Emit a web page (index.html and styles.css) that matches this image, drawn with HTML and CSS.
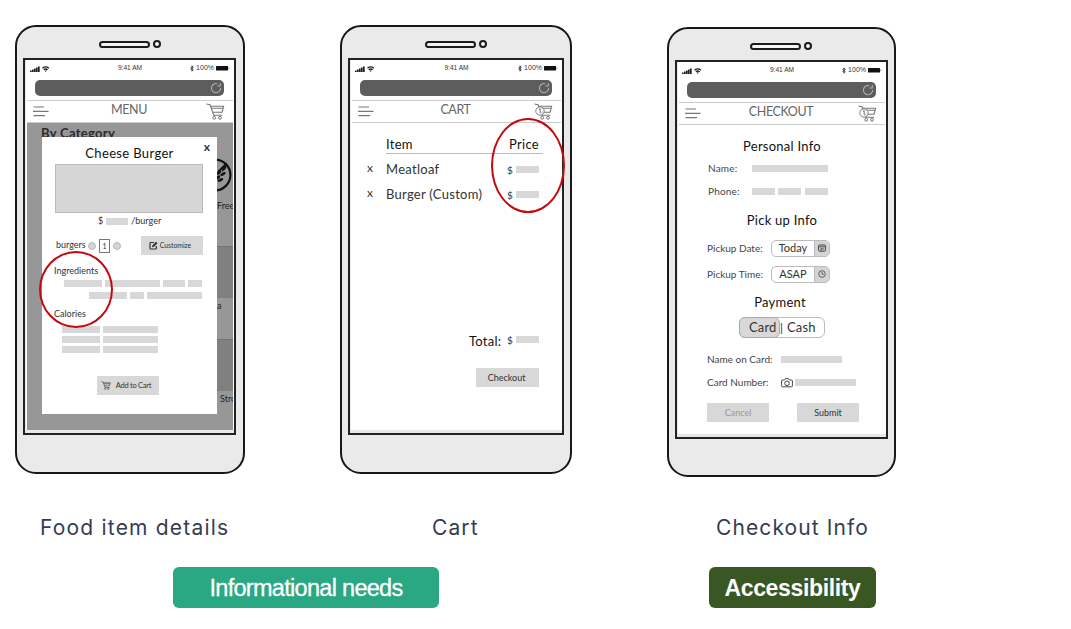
FILE: index.html
```html
<!DOCTYPE html>
<html lang="en">
<head>
<meta charset="utf-8">
<title>Wireframes</title>
<link rel="stylesheet" href="styles.css">
</head>
<body>
<svg class="defs" aria-hidden="true">
  <symbol id="signal" viewBox="0 0 20 8"><path d="M0 5.500h1.700V7H0zM2 4.600h1.700V7H2zM4 3.600h1.700V7H4zM6 2.400h1.700V7H6zM8 1.400h1.700V7H8z" fill="#222"/><path d="M12.500 3.200q3.200-2.600 6.400 0M13.800 4.700q1.900-1.400 3.800 0" fill="none" stroke="#222" stroke-width="1.400"/><path d="M14.600 5.400h2.200l-1.100 1.600z" fill="#222"/></symbol>
  <symbol id="bluetooth" viewBox="0 0 4 7"><path d="M.6 2l2.600 2.800L2 6.200V.8l1.200 1.400L.6 5" fill="none" stroke="#333" stroke-width=".9"/></symbol>
  <symbol id="battery" viewBox="0 0 14 5"><rect width="12" height="4.600" rx=".6" fill="#111"/><path d="M12.800 1.400v1.800" stroke="#777" stroke-width=".8"/></symbol>
  <symbol id="reload" viewBox="0 0 12 12"><path d="M7.200 1.700A4.600 4.600 0 1 0 10.600 6M10.300 1v3H7.300" fill="none" stroke="#b0b0b0" stroke-width="1.100"/></symbol>
  <symbol id="burger" viewBox="0 0 16 11"><path d="M.5 1H11M0 5.300h15.500M.5 9.600H12" stroke="#777" stroke-width="1.200"/></symbol>
  <symbol id="cart" viewBox="0 0 19 17"><path d="M.5 1l3.600.8 3.600 10.500h8.500M4.600 3.300h13l-1.500 5.900H6.600M5.300 5.300h11.500" fill="none" stroke="currentColor" stroke-width="1.100"/><circle cx="8.200" cy="14.800" r="1.400" fill="none" stroke="currentColor"/><circle cx="14" cy="14.800" r="1.400" fill="none" stroke="currentColor"/></symbol>
  <symbol id="cartfull" viewBox="0 0 19 17"><use href="#cart"/><circle cx="6" cy="8" r="4.200" fill="#fff" fill-opacity=".7" stroke="currentColor" stroke-width=".9"/><path d="M5.200 6.600l1-.7v4.400" fill="none" stroke="currentColor" stroke-width=".9"/></symbol>
  <symbol id="edit" viewBox="0 0 9 9"><path d="M5 1.500H1.800Q1 1.500 1 2.300v4.900q0 .8.8.8h4.800q.8 0 .8-.8V5" fill="none" stroke="#333" stroke-width="1.200"/><path d="M3 6.200l.5-1.900L7 .7 8.500 2.200 5 5.700z" fill="#333"/></symbol>
  <symbol id="camera" viewBox="0 0 12 10"><path d="M1.500 2h2l1-1.400h3L8.500 2h2q.9 0 .9.900v5q0 .9-.9.900h-9q-.9 0-.9-.9v-5q0-.9.900-.9z" fill="none" stroke="#444"/><circle cx="6" cy="5.300" r="2.300" fill="none" stroke="#444"/></symbol>
  <symbol id="calendar" viewBox="0 0 8 8"><rect x=".6" y="1" width="6.800" height="6.200" rx=".8" fill="none" stroke="#444"/><path d="M1 2.700h6M2.200 4h1.400v2H2.200M5 3.600v2.600" fill="none" stroke="#444" stroke-width=".8"/></symbol>
  <symbol id="clock" viewBox="0 0 8 8"><circle cx="4" cy="4" r="3.300" fill="none" stroke="#444" stroke-width=".8"/><path d="M4 2v2.200h1.800" fill="none" stroke="#444" stroke-width=".8"/></symbol>
  <symbol id="nowheat" viewBox="0 0 34 34"><circle cx="17" cy="17" r="15.400" fill="none" stroke="#111" stroke-width="2.200"/><path d="M20 14L28.500 5.500" stroke="#111" stroke-width="1.800"/><g fill="#111"><ellipse cx="26" cy="10.500" rx="1.500" ry="3" transform="rotate(35 26 10.500)"/><ellipse cx="21" cy="14.500" rx="1.500" ry="2.800" transform="rotate(45 21 14.500)"/><ellipse cx="25" cy="16" rx="1.500" ry="3" transform="rotate(60 25 16)"/><ellipse cx="20" cy="19.500" rx="1.500" ry="2.800" transform="rotate(50 20 19.500)"/><ellipse cx="22.500" cy="22" rx="1.500" ry="3" transform="rotate(65 22.500 22)"/></g></symbol>
</svg>

<main class="board">
  <section class="phones">
    <article class="phone phone-menu">
      <div class="speaker"><i class="slot"></i><i class="lens"></i></div>
      <div class="screen">
        <div class="status"><svg class="i-signal"><use href="#signal"/></svg><span class="time">9:41 AM</span><span class="power"><svg class="i-bt"><use href="#bluetooth"/></svg><b>100%</b><svg class="i-bat"><use href="#battery"/></svg></span></div>
        <div class="url"><svg class="i-reload"><use href="#reload"/></svg></div>
        <header class="bar"><svg class="i-burger"><use href="#burger"/></svg><h2>MENU</h2><svg class="i-cart"><use href="#cart"/></svg></header>
        <div class="backdrop">
          <div class="category">By Category</div>
          <div class="peek">
            <svg class="i-wheat"><use href="#nowheat"/></svg>
            <span class="peek-free">Free</span>
            <i class="tile tile-a"></i>
            <span class="peek-a">a</span>
            <i class="tile tile-b"></i>
            <span class="peek-stro">Stro</span>
          </div>
          <div class="modal">
            <div class="modal-title">Cheese Burger</div>
            <span class="close">x</span>
            <div class="photo"></div>
            <div class="price-row"><span>$</span><i class="ph w22"></i><span class="per">/burger</span></div>
            <div class="qty-row"><span class="qty-name">burgers</span><i class="dot"></i><span class="qty">1</span><i class="dot"></i><span class="btn customize"><svg class="i-edit"><use href="#edit"/></svg><em>Customize</em></span></div>
            <div class="sub ingredients">Ingredients</div>
            <div class="bars bars-a"><i class="ph w38"></i><i class="ph w55"></i><i class="ph w22"></i><i class="ph w14"></i></div>
            <div class="bars bars-b"><i class="ph w38"></i><i class="ph w14"></i><i class="ph w55"></i></div>
            <div class="sub calories">Calories</div>
            <div class="bars bars-c"><i class="ph w38"></i><i class="ph w55"></i></div>
            <div class="bars bars-c"><i class="ph w38"></i><i class="ph w55"></i></div>
            <div class="bars bars-c"><i class="ph w38"></i><i class="ph w55"></i></div>
            <div class="btn add"><svg class="i-add"><use href="#cart"/></svg><em>Add to Cart</em></div>
          </div>
        </div>
      </div>
      <i class="ring ring-menu"></i>
    </article>

    <article class="phone phone-cart">
      <div class="speaker"><i class="slot"></i><i class="lens"></i></div>
      <div class="screen">
        <div class="status"><svg class="i-signal"><use href="#signal"/></svg><span class="time">9:41 AM</span><span class="power"><svg class="i-bt"><use href="#bluetooth"/></svg><b>100%</b><svg class="i-bat"><use href="#battery"/></svg></span></div>
        <div class="url"><svg class="i-reload"><use href="#reload"/></svg></div>
        <header class="bar"><svg class="i-burger"><use href="#burger"/></svg><h2>CART</h2><svg class="i-cart"><use href="#cartfull"/></svg></header>
        <div class="cart-head"><span>Item</span><span>Price</span></div>
        <div class="cart-row"><span class="remove">x</span><span class="item">Meatloaf</span><span class="cost">$<i class="ph w23"></i></span></div>
        <div class="cart-row"><span class="remove">x</span><span class="item">Burger (Custom)</span><span class="cost">$<i class="ph w23"></i></span></div>
        <div class="total"><span class="total-name">Total:</span><span class="cost">$<i class="ph w23"></i></span></div>
        <div class="btn checkout"><em>Checkout</em></div>
      </div>
      <i class="ring ring-cart"></i>
    </article>

    <article class="phone phone-pay">
      <div class="speaker"><i class="slot"></i><i class="lens"></i></div>
      <div class="screen">
        <div class="status"><svg class="i-signal"><use href="#signal"/></svg><span class="time">9:41 AM</span><span class="power"><svg class="i-bt"><use href="#bluetooth"/></svg><b>100%</b><svg class="i-bat"><use href="#battery"/></svg></span></div>
        <div class="url"><svg class="i-reload"><use href="#reload"/></svg></div>
        <header class="bar"><svg class="i-burger"><use href="#burger"/></svg><h2>CHECKOUT</h2><svg class="i-cart"><use href="#cartfull"/></svg></header>
        <h3 class="personal">Personal Info</h3>
        <div class="field narrow"><label>Name:</label><i class="ph w76"></i></div>
        <div class="field narrow"><label>Phone:</label><span class="split"><i class="ph w23"></i><i class="ph w23"></i><i class="ph w23"></i></span></div>
        <h3 class="pickup">Pick up Info</h3>
        <div class="field pick"><label>Pickup Date:</label><span class="select"><span>Today</span><b><svg class="i-mini"><use href="#calendar"/></svg></b></span></div>
        <div class="field pick"><label>Pickup Time:</label><span class="select"><span>ASAP</span><b><svg class="i-mini"><use href="#clock"/></svg></b></span></div>
        <h3 class="payment">Payment</h3>
        <div class="segment"><span class="on">Card</span><i>|</i><span class="off">Cash</span></div>
        <div class="field card first"><label>Name on Card:</label><i class="ph w61"></i></div>
        <div class="field card"><label>Card Number:</label><svg class="i-camera"><use href="#camera"/></svg><i class="ph w61"></i></div>
        <div class="actions"><span class="btn cancel"><em>Cancel</em></span><span class="btn submit"><em>Submit</em></span></div>
      </div>
    </article>
  </section>

  <section class="captions"><span class="cap-menu">Food item details</span><span class="cap-cart">Cart</span><span class="cap-pay">Checkout Info</span></section>
  <section class="tags"><span class="tag info"><em>Informational needs</em></span><span class="tag access"><em>Accessibility</em></span></section>
</main>
</body>
</html>
```
FILE: styles.css
```css
* { box-sizing: border-box; }
body { margin: 0; background: #fff; color: #333; font-family: Lato, "Liberation Sans", sans-serif; }
h2, h3 { margin: 0; font-weight: 400; }
em, b, i { font-style: normal; font-weight: inherit; }
i, svg { display: block; flex: none; }
span, label { white-space: nowrap; }
.defs { position: absolute; width: 0; height: 0; }
.board { width: 1071px; height: 629px; padding: 25px 0 0 15px; overflow: hidden; }

/* phone frame */
.phones { display: flex; align-items: flex-start; height: 479px; }
.phone { position: relative; height: 449px; padding: 13px 7px 0 6px; border: 2px solid #181818; border-radius: 21px; background: #eaeaea; }
.phone-menu { width: 230px; margin-right: 95px; }
.phone-cart { width: 232px; margin-right: 95px; }
.phone-pay { width: 229px; height: 450px; margin-top: 2px; }
.speaker { display: flex; justify-content: center; align-items: center; gap: 3px; height: 8px; }
.slot { width: 51px; height: 7px; border: 2px solid #1b1b1b; border-radius: 4px; background: #f4f4f4; }
.lens { width: 8px; height: 8px; border: 2px solid #1b1b1b; border-radius: 50%; background: #f4f4f4; }
.screen { height: 377px; margin-top: 10px; padding: 0 1px 2px 2px; border: 2px solid #222; background: #fff; overflow: hidden; box-shadow: inset 0 -3px #e8e8e8, inset 1px 0 #e8e8e8; }
.phone-cart .screen { width: 216px; }
.phone-pay .screen { width: 213px; height: 379px; }

/* browser chrome */
.status { display: grid; grid-template-columns: 1fr auto 1fr; align-items: center; height: 17px; padding: 0 3px; font: 7px "Liberation Sans", sans-serif; }
.time { font-size: 6.6px; padding-bottom: 2px; }
.power { display: flex; justify-content: flex-end; align-items: center; gap: 2px; }
.power b { font-size: 7px; padding-bottom: 3px; }
.i-signal { width: 20px; height: 8px; }
.i-bt { width: 4px; height: 7px; }
.i-bat { width: 14px; height: 5px; }
.url { display: flex; justify-content: flex-end; align-items: center; height: 16px; margin: 3px 9px 4px 8px; padding-right: 2px; border-radius: 5px; background: #5d5d5d; }
.i-reload { width: 12px; height: 12px; }
.bar { display: grid; grid-template-columns: 19px 1fr 19px; align-items: center; height: 23px; padding: 0 8px 1px 6px; border: solid #ccc; border-width: 1px 0; color: #777; }
.bar h2 { padding-bottom: 2px; text-align: center; font-size: 12.5px; line-height: 18px; letter-spacing: -.4px; color: #666; }
.i-burger { width: 16px; height: 11px; }
.i-cart { width: 19px; height: 17px; }

.ph { height: 7px; background: #d8d8d8; }
.w14 { width: 14px; } .w22 { width: 22px; } .w23 { width: 23px; } .w38 { width: 38px; }
.w55 { width: 55px; } .w61 { width: 61px; } .w76 { width: 76px; }
.btn { display: flex; align-items: center; justify-content: center; height: 19px; background: #d8d8d8; font-size: 9px; }
.btn em { padding-bottom: 1px; }
.ring { position: absolute; border: 2px solid #c20a10; border-radius: 50%; }
.ring-menu { left: 22px; top: 224px; width: 74px; height: 77px; }
.ring-cart { left: 149px; top: 91px; width: 74px; height: 95px; }

/* menu */
.backdrop { position: relative; height: 307px; background: #979797; overflow: hidden; }
.category { padding: 1px 0 0 14px; font-size: 13px; line-height: 18px; font-weight: 700; letter-spacing: .3px; color: #2b2b2b; }
.peek { display: flex; flex-direction: column; align-items: flex-start; margin-left: 190px; font-size: 9px; line-height: 12px; color: #222; }
.i-wheat { width: 34px; height: 34px; margin: 16px 0 0 -19px; }
.peek-free { margin-top: 8px; }
.tile { width: 18px; background: #808080; border-top: 1px solid #737373; }
.tile-a { height: 52px; margin-top: 34px; }
.peek-a { height: 41px; line-height: 16px; }
.tile-b { height: 52px; }
.peek-stro { margin: 2px 0 0 3px; }
.modal { position: absolute; left: 15px; top: 14px; width: 175px; height: 277px; background: #fff; }
.modal-title { padding-top: 6px; text-align: center; font-size: 13px; line-height: 20px; letter-spacing: .35px; color: #111; }
.close { position: absolute; right: 7px; top: 3px; font-size: 12px; line-height: 14px; font-weight: 700; }
.photo { height: 49px; margin: 1px 14px 0 13px; border: 1px solid #bbb; background: #d6d6d6; }
.price-row { display: flex; align-items: center; height: 16px; margin-left: 56px; font-size: 9px; }
.price-row .ph { margin: 0 3px; }
.price-row span { padding-bottom: 2px; }
.qty-row { display: flex; align-items: center; height: 19px; margin: 7px 0 0 14px; font-size: 9px; }
.qty-name { width: 32px; padding-bottom: 2px; }
.dot { width: 8px; height: 8px; border: 1px solid #bbb; border-radius: 50%; background: #d4d4d4; }
.qty { width: 11px; height: 14px; margin: 0 3px; border: 1px solid #777; font-size: 7px; line-height: 12px; text-align: center; }
.customize { width: 62px; margin-left: 20px; padding-right: 4px; gap: 2px; font-size: 6.8px; }
.i-edit { width: 9px; height: 9px; }
.sub { height: 14px; padding-left: 12px; font-size: 9px; line-height: 14px; }
.ingredients { margin-top: 9px; }
.bars { display: flex; gap: 3px; }
.bars-a { margin: 2px 0 5px 22px; }
.bars-b { margin: 0 0 8px 47px; }
.bars-c { margin: 0 0 3px 20px; }
.calories { margin-bottom: 5px; }
.add { width: 62px; margin: 23px 0 0 55px; padding-right: 4px; gap: 5px; font-size: 7.5px; letter-spacing: -.25px; }
.i-add { width: 10px; height: 9px; }

/* cart */
.cart-head { display: flex; justify-content: space-between; width: 157px; height: 20px; margin: 11px 0 3px 34px; padding-right: 4px; border-bottom: 1px solid #bbb; font-size: 13px; line-height: 20px; letter-spacing: .3px; color: #111; }
.cart-row { display: grid; grid-template-columns: 19px 121px 36px; align-items: center; height: 25px; margin-left: 15px; font-size: 13px; }
.item { padding-bottom: 2px; letter-spacing: .28px; }
.remove { padding-bottom: 3px; font-size: 12px; line-height: 14px; }
.cost { display: flex; align-items: center; gap: 3px; font-size: 10px; }
.total { display: grid; grid-template-columns: 38px auto; align-items: center; height: 20px; margin: 124px 0 0 117px; }
.total-name { font-size: 13px; letter-spacing: .25px; color: #111; }
.total .cost { padding-bottom: 3px; }
.checkout { width: 63px; margin: 17px 0 0 124px; padding-right: 2px; }

/* checkout */
h3 { height: 20px; text-align: center; font-size: 13px; line-height: 20px; letter-spacing: .25px; color: #111; }
.personal { margin: 11px 0 1px; }
.pickup { margin: 7px 0 5px; }
.payment { margin: 5px 12px 5px 8px; }
.field { display: flex; align-items: center; font-size: 10px; color: #444; }
.field label { padding-bottom: 2px; }
.narrow { height: 23px; padding-left: 29px; }
.narrow label { width: 43.5px; letter-spacing: .2px; }
.split { display: flex; gap: 3.5px; }
.pick { height: 26px; padding-left: 28px; }
.pick label { width: 64px; padding-bottom: 0; }
.select { display: flex; align-items: stretch; width: 59px; height: 17px; border: 1px solid #bbb; border-radius: 5px; overflow: hidden; font-size: 11px; line-height: 14px; text-align: center; color: #333; }
.select > span { flex: 1; }
.select b { display: grid; place-items: center; width: 15px; border-left: 1px solid #bbb; background: #d4d4d4; }
.i-mini { width: 8px; height: 8px; }
.segment { display: flex; width: 86px; height: 21px; margin-left: 60px; border: 1px solid #bbb; border-radius: 6px; font-size: 13px; line-height: 19px; letter-spacing: .15px; }
.on { width: 41px; padding-left: 9px; margin: -1px 0 -1px -1px; border: 1px solid #aaa; border-radius: 6px; background: #d8d8d8; }
.off { margin-left: 4px; }
.segment i { width: 3px; text-align: center; font-size: 12px; }
.card { height: 23px; padding-left: 28px; }
.card.first { margin-top: 10px; }
.card label { width: 74px; }
.i-camera { width: 12px; height: 10px; margin-right: 1.5px; }
.actions { display: flex; gap: 28px; margin: 9px 0 0 28px; }
.actions .btn { width: 62px; }
.cancel { color: #999; }

/* captions and tags */
.captions { display: flex; height: 48px; font: 21px/48px Inter, sans-serif; color: #343d50; }
.cap-menu { width: 392px; padding-left: 25px; letter-spacing: 1.2px; }
.cap-cart { width: 284px; padding-left: 25px; letter-spacing: 1.1px; }
.cap-pay { padding-left: 25px; letter-spacing: 1.1px; }
.tags { display: flex; gap: 270px; margin: 15px 0 0 158px; font: 24px "Liberation Sans", sans-serif; color: #fff; }
.tag { display: grid; place-items: center; height: 41px; border-radius: 6px; }
.tag em { padding-top: 2px; }
.info { width: 266px; background: #29a883; font-size: 23.5px; letter-spacing: -.7px; -webkit-text-stroke: .3px #fff; }
.access { width: 167px; background: #385723; font-size: 23px; font-weight: 700; letter-spacing: -.35px; }
```
